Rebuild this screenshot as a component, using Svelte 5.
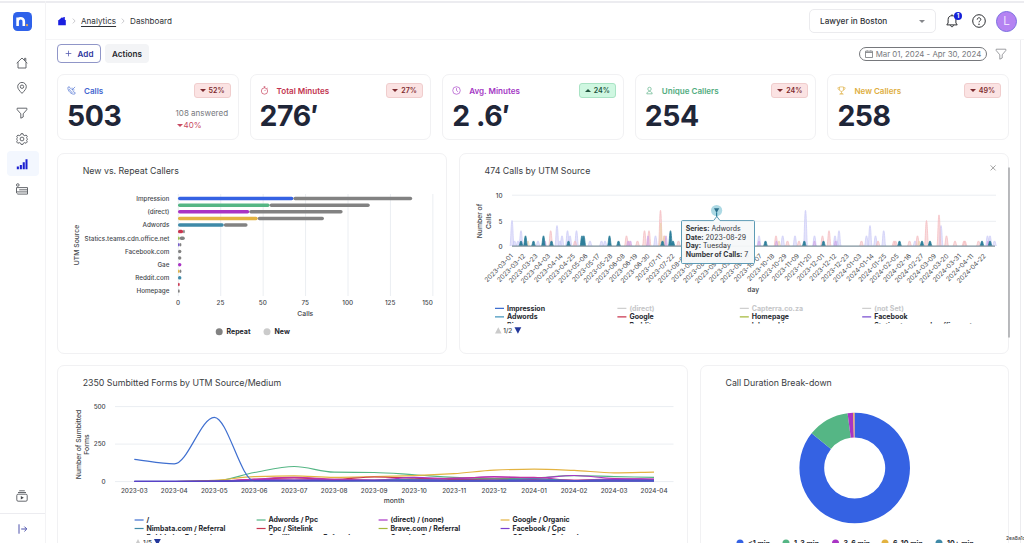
<script>
    const BLUE = '#3562e3';
    const GREEN = '#55b685';
    const PURPLE = '#a934c4';
    const YELLOW = '#e3b341';
    const TEAL = '#3f8aa8';
    const RED = '#c9364f';
    const GRAY = '#828282';

    const kpis = [
        { icon: 'phone', label: 'Calls', value: '503', change: '52%', up: false, color: '#3f66cf' },
        { icon: 'timer', label: 'Total Minutes', value: '276′', change: '27%', up: false, color: '#c2334f' },
        { icon: 'clock', label: 'Avg. Minutes', value: '2 .6′', change: '24%', up: true, color: '#a336c4' },
        { icon: 'user', label: 'Unique Callers', value: '254', change: '24%', up: false, color: '#51ac80' },
        { icon: 'cup', label: 'New Callers', value: '258', change: '49%', up: false, color: '#deae3e' }
    ];

    // new / total callers for every source, only every other one is labelled
    const callers = [
        { name: 'Impression', fresh: 68, total: 138, color: BLUE },
        { name: '', fresh: 54, total: 113, color: GREEN },
        { name: '(direct)', fresh: 42, total: 97, color: PURPLE },
        { name: '', fresh: 47, total: 86, color: YELLOW },
        { name: 'Adwords', fresh: 27, total: 41, color: TEAL },
        { name: '', fresh: 3, total: 4, color: RED },
        { name: 'Statics.teams.cdn.office.net', fresh: 1, total: 4, color: '#9cc24a' },
        { name: '', fresh: 1, total: 2, color: '#6b4fc8' },
        { name: 'Facebook.com', fresh: 0, total: 2, color: GRAY },
        { name: '', fresh: 0, total: 2, color: GRAY },
        { name: 'Gae', fresh: 2, total: 2, color: PURPLE },
        { name: '', fresh: 1, total: 2, color: YELLOW },
        { name: 'Reddit.com', fresh: 2, total: 2, color: TEAL },
        { name: '', fresh: 1, total: 1, color: RED },
        { name: 'Homepage', fresh: 0, total: 1, color: GRAY }
    ];
    const callersX = (v) => 178 + v * 1.697;
    const callersY = (i) => 198.5 + i * 6.61;

    // calls by day: [x, calls]
    const spikes = [
        { color: '#c9c8f6', width: 2.2, points: [[512, 5], [514.5, 1], [518, 1], [521, 3], [538, 1], [557, 4], [560, 1], [562, 2], [567.5, 3], [570, 2], [576.5, 3], [590, 1], [601.5, 1], [605, 1], [655.5, 2], [759, 2], [782.7, 2], [795, 2], [805.5, 7], [814.5, 2], [835, 2], [837, 1], [839, 3], [866.5, 2], [870, 4], [875.5, 2], [883.7, 3], [915, 1], [941, 4], [987.5, 2], [990, 2], [994.5, 1]] },
        { color: '#f3b9bd', width: 2.2, points: [[550.7, 3], [575, 1], [626.5, 2], [629, 1], [637.5, 1], [644.5, 3], [649, 3], [660.5, 7], [664.5, 2], [678.5, 1], [776, 2], [787.5, 1], [799, 1], [822.5, 2], [829, 3], [861.5, 1], [878, 1], [894, 1], [895.5, 1], [909.5, 1], [917.5, 2], [926.5, 5], [939, 6.1], [946.5, 2], [955, 1], [964, 1], [965, 1], [978.5, 1]] },
        { color: '#ecd3ae', width: 1.6, points: [[528, 1], [660.8, 4.5], [664, 2], [779, 1], [919, 1]] },
        { color: '#cfa4e6', width: 1.6, points: [[545, 1], [628, 1], [630.5, 1], [648, 2], [666, 2], [759, 1], [776.5, 1], [814.5, 1], [835.5, 1], [988, 1]] },
    ];
    const adwords = [[521, 1], [525.5, 2], [533.5, 1], [543.5, 2], [551.5, 1], [568.5, 1], [582, 2], [583.8, 2], [609.5, 2], [618.5, 1], [662.5, 1], [670.5, 3], [673, 1], [765.5, 1], [804.3, 1], [823.5, 1], [899.5, 1], [922, 1], [930, 1], [982, 1], [990, 1]];

    function spikePath(points, w) {
        return points.map(([x, v]) => {
            const top = 246 - v * 5.1;
            return `M${x - w} 246C${x - w / 2} 246 ${x - w / 2} ${top} ${x} ${top}S${x + w / 2} 246 ${x + w} 246`;
        }).join('');
    }

    const days = Array.from({ length: 39 }, (_, i) =>
        new Date(Date.UTC(2023, 2, 1 + i * 11)).toISOString().slice(0, 10)
    );

    const sourceLegend = [
        ['Impression', '#3f6fd0', true], ['(direct)', '#cfcfcf', false], ['Capterra.co.za', '#cfcfcf', false], ['(not Set)', '#cfcfcf', false],
        ['Adwords', '#4596bd', true], ['Google', RED, true], ['Homepage', '#a5b93c', true], ['Facebook', '#7a4fd0', true],
        ['Bing', GREEN, true], ['Reddit', PURPLE, true], ['Inbound.io', YELLOW, true], ['Statics.teams.cdn.office.net', TEAL, true]
    ];

    const months = ['2023-03', '2023-04', '2023-05', '2023-06', '2023-07', '2023-08', '2023-09', '2023-10', '2023-11', '2023-12', '2024-01', '2024-02', '2024-03', '2024-04'];
    const formSeries = [
        { color: '#a5b93c', data: [0, 0, 2, 5, 6, 5, 6, 5, 5, 4, 5, 4, 5, 6] },
        { color: GREEN, data: [0, 0, 3, 60, 100, 62, 60, 45, 28, 20, 25, 39, 33, 27] },
        { color: YELLOW, data: [0, 0, 8, 32, 38, 27, 32, 39, 52, 76, 83, 74, 58, 63] },
        { color: RED, data: [0, 0, 2, 14, 24, 14, 30, 22, 14, 15, 12, 8, 10, 9] },
        { color: PURPLE, data: [0, 0, 1, 12, 15, 12, 8, 27, 20, 32, 22, 40, 20, 16] },
        { color: '#c332a4', data: [0, 0, 1, 16, 27, 14, 10, 12, 22, 30, 27, 8, 18, 14] },
        { color: TEAL, data: [0, 0, 2, 6, 8, 6, 8, 14, 8, 10, 18, 6, 12, 8] },
        { color: '#7a3fd0', data: [0, 0, 0, 8, 6, 8, 7, 10, 8, 7, 9, 4, 12, 10] },
        { color: '#3f6fd0', data: [148, 117, 428, 4, 4, 4, 4, 4, 4, 4, 4, 4, 4, 4] },
        { color: '#4d44c4', data: [2, 2, 2, 4, 4, 4, 4, 3, 3, 3, 3, 3, 3, 3] }
    ];
    const formX = (i) => 134.3 + i * 39.98;
    const formY = (v) => 481.5 - v * 0.15;

    // smooth line that never overshoots its own points
    function smooth(data) {
        const step = formX(1) - formX(0);
        const ys = data.map(formY);
        const slope = ys.map((y, i) => {
            if (i === 0) return (ys[1] - y) / step;
            if (i === ys.length - 1) return (y - ys[i - 1]) / step;
            const a = (y - ys[i - 1]) / step;
            const b = (ys[i + 1] - y) / step;
            return a * b <= 0 ? 0 : (2 * a * b) / (a + b);
        });
        let d = `M${formX(0)} ${ys[0]}`;
        for (let i = 1; i < ys.length; i++) {
            d += `C${formX(i - 1) + step / 3} ${ys[i - 1] + (slope[i - 1] * step) / 3} ${formX(i) - step / 3} ${ys[i] - (slope[i] * step) / 3} ${formX(i)} ${ys[i]}`;
        }
        return d;
    }

    const formLegend = [
        ['/', '#3f6fd0'], ['Adwords / Ppc', GREEN], ['(direct) / (none)', PURPLE], ['Google / Organic', YELLOW],
        ['Nimbata.com / Referral', TEAL], ['Ppc / Sitelink', RED], ['Brave.com / Referral', '#a5b93c'], ['Facebook / Cpc', '#7a3fd0'],
        ['Bubble.io / Referral', BLUE], ['Capilliance.co / Referral', GREEN], ['Google / Cpc', PURPLE], ['GSuape.x / Referral', YELLOW]
    ];

    const durations = [
        { name: '<1 min', from: 0, to: 308.8, color: BLUE, x: 740 },
        { name: '1-3 min', from: 308.8, to: 352.6, color: GREEN, x: 786 },
        { name: '3-6 min', from: 352.6, to: 358.4, color: PURPLE, x: 835.5 },
        { name: '6-10 min', from: 358.4, to: 359.3, color: YELLOW, x: 885 },
        { name: '10+ min', from: 359.3, to: 360, color: '#c8788c', x: 939, dot: TEAL }
    ];
    function arc({ from, to }) {
        const pt = (deg, r) => {
            const a = (deg * Math.PI) / 180;
            return `${854.7 + r * Math.sin(a)} ${468 - r * Math.cos(a)}`;
        };
        const big = to - from > 180 ? 1 : 0;
        return `M${pt(from, 55.3)}A55.3 55.3 0 ${big} 1 ${pt(to, 55.3)}L${pt(to, 30.5)}A30.5 30.5 0 ${big} 0 ${pt(from, 30.5)}Z`;
    }
</script>

<div class="app">
    <aside>
        <svg class="logo" viewBox="0 0 19 19">
            <rect width="19" height="19" rx="4.5" fill="#2f62ea" />
            <path d="M4.6 14V5.600M4.6 9.4c0-4 6.2-4.2 6.2 0V14" fill="none" stroke="#fff" stroke-width="2.6" />
            <circle cx="14" cy="13.1" r="1.2" fill="#e0a35a" />
        </svg>
        <nav>
            <a href="#home"><svg viewBox="0 0 12 12"><path d="M.7 6.2 6 1l5.3 5.2M2 5.2V11h8V5.2M8.6 3.2V1.3h1.2v3" /></svg></a>
            <a href="#places"><svg viewBox="0 0 12 12"><path d="M6 11.4C3.4 8.6 1.7 6.8 1.7 4.7a4.3 4.3 0 0 1 8.6 0c0 2.1-1.7 3.9-4.3 6.7z" /><circle cx="6" cy="4.7" r="1.7" /></svg></a>
            <a href="#filter"><svg viewBox="0 0 12 12"><path d="M1.2 1.2h9.6v1.5L7.2 6.8V10L4.8 11.2V6.8L1.2 2.7z" /></svg></a>
            <a href="#settings"><svg viewBox="0 0 12 12"><path d="m5 .7h2l.4 1.4 1.4.6 1.3-.7L11.3 3.3l-.7 1.2.5 1.1.4.4-.4.9-.5.7.7 1.3-1.3 1.4-1.2-.7-1.4.6L7 11.4H5l-.4-1.2-1.4-.6-1.3.7L.6 8.9l.8-1.3-.5-.9V5.3l.5-.8L.7 3.2 2 2l1.2.7 1.4-.6z" /><circle cx="6" cy="6" r="1.9" /></svg></a>
            <a href="#reports" class="active"><svg viewBox="0 0 12 12"><path class="solid" d="M.8 8.4h2.1v2.8H.8zM3.8 7h2.1v4.2H3.8zM6.7 4.3h2.1v6.9H6.7zM9.5 1.2h2v10h-2z" /></svg></a>
            <a href="#forms"><svg viewBox="0 0 12 12"><circle cx="1.800" cy="2" r="1.3" /><path d="M.5 4.600h11v6.500H1.800L.5 9.900zM3.200 6.800h8.300M.8 8.900h10.700" /></svg></a>
        </nav>
        <a class="videos" href="#videos"><svg viewBox="0 0 12 12"><path d="M3.2.8h5.6M2 2.5h8" /><rect x=".8" y="4.2" width="10.4" height="7" rx="1.3" /><path class="solid" d="M4.8 5.9v3.6l3-1.8z" /></svg></a>
        <a class="expand" href="#expand"><svg viewBox="0 0 12 12"><path d="M2 1.3v9.4M4.2 6h5.2M7.4 3.6 9.8 6 7.4 8.4" /></svg></a>
    </aside>

    <div class="page">
        <header>
            <div class="crumbs">
                <svg class="home" viewBox="0 0 10 10"><path d="M.7 5 5 1.2l1.3 1V1h1.5v2.4L9.3 5H8.8v4.3H1.2V5z" /></svg>
                <svg class="chev" viewBox="0 0 4 6"><path d="m.8.6 2.3 2.4L.8 5.4" /></svg>
                <a href="#analytics">Analytics</a>
                <svg class="chev" viewBox="0 0 4 6"><path d="m.8.6 2.3 2.4L.8 5.4" /></svg>
                <span>Dashboard</span>
            </div>
            <div class="tools">
                <button class="select"><span>Lawyer in Boston</span><i></i></button>
                <div class="bell">
                    <svg viewBox="0 0 12 14"><path d="M.8 10.9h10.4L9.9 9V5.600C9.900 3.100 8.300 1.700 6 1.700S2.100 3.100 2.100 5.600V9zM6 1.700V.4M4.500 11.200c0 2 3 2 3 0" /></svg>
                    <b>1</b>
                </div>
                <svg class="help" viewBox="0 0 14 14"><circle cx="7" cy="7" r="6.300" /><path d="M5.200 5.600C5.200 3.200 8.800 3.200 8.800 5.500 8.800 6.800 7 6.900 7 8.300" /><circle cx="7" cy="10.200" r=".35" /></svg>
                <div class="avatar">L</div>
            </div>
        </header>

        <main>
            <div class="toolbar">
                <button class="add"><svg viewBox="0 0 8 8"><path d="M4 .8v6.400M.8 4h6.400" /></svg>Add</button>
                <button class="actions">Actions</button>
                <div class="range">
                    <svg viewBox="0 0 8 8"><path d="M.5 1.200h7v6.300h-7zM.5 2.500h7M2.200.3v.9M5.800.3v.9" /></svg>
                    Mar 01, 2024 - Apr 30, 2024
                </div>
                <svg class="funnel" viewBox="0 0 12 12"><path d="M1.200 1.200h9.600v1.300L7.200 6.800V10L4.800 11.200V6.800L1.200 2.500z" /></svg>
            </div>

            <section class="kpis">
                {#each kpis as kpi}
                    <div class="card kpi">
                        <div class="kpi-head" style="color: {kpi.color}">
                            <svg viewBox="0 0 10 10">
                                {#if kpi.icon === 'phone'}
                                    <path d="M1 1.500 2.500.8l1.300 2.200-1 1c.6 1.400 1.600 2.500 3 3.200l1-1L9.200 7.500 8.500 9C5 9.800.5 5.500 1 1.500zM9 1 5.800 4.200M5.600 1.800v2.600h2.700" />
                                {:else if kpi.icon === 'timer'}
                                    <circle cx="5" cy="5.600" r="3.500" /><path d="M5 5.600 6.400 4.200M4 .8h2M5 .8v1.200M8 2l.7.7" />
                                {:else if kpi.icon === 'clock'}
                                    <circle cx="5" cy="5" r="4.200" /><path d="M5 2.300V5l1.800 1.500" />
                                {:else if kpi.icon === 'user'}
                                    <circle cx="5" cy="3.300" r="1.900" /><path d="M2 8.700c.2-3.500 5.800-3.500 6 0z" />
                                {:else}
                                    <path d="M2.800 1h4.400v2.600c0 3.300-4.400 3.300-4.400 0zM2.800 1.900H1c0 1.800.8 2.500 2.200 2.600M7.200 1.900H9c0 1.800-.8 2.500-2.200 2.600M5 6.100v2.200M3 9c0-.9 4-.9 4 0z" />
                                {/if}
                            </svg>
                            <span>{kpi.label}</span>
                            <em class:up={kpi.up}><i></i>{kpi.change}</em>
                        </div>
                        <div class="kpi-body">
                            <strong>{kpi.value}</strong>
                            {#if kpi.icon === 'phone'}
                                <div class="answered">108 answered<span><i></i>40%</span></div>
                            {/if}
                        </div>
                    </div>
                {/each}
            </section>

            <section class="row first">
                <div class="card">
                    <svg class="chart" width="389" height="199" viewBox="58 154 389 199">
                        <text class="title" x="82.700" y="174">New vs. Repeat Callers</text>
                        {#each [0, 25, 50, 75, 100, 125, 150] as tick}
                            <path class="grid" d="M{callersX(tick) + .3} 194V296" />
                            <text class="axis" x={tick === 150 ? 427.500 : callersX(tick)} y="304.700" text-anchor="middle">{tick}</text>
                        {/each}
                        {#each callers as c, i}
                            <text class="axis" x="169.400" y={callersY(i) + 2.400} text-anchor="end">{c.name}</text>
                            {#if c.fresh}
                                <rect x="178" y={callersY(i) - 1.700} width={c.fresh * 1.697} height="3.500" rx="1.700" fill={c.color} />
                            {/if}
                            {#if c.total > c.fresh}
                                <rect x={callersX(c.fresh)} y={callersY(i) - 1.700} width={(c.total - c.fresh) * 1.697} height="3.500" rx="1.700" fill={GRAY} />
                            {/if}
                        {/each}
                        <text class="name" x="305.300" y="315.800" text-anchor="middle">Calls</text>
                        <text class="name" transform="translate(79 245) rotate(-90)" text-anchor="middle">UTM Source</text>
                        <circle cx="219.200" cy="331.800" r="3.500" fill="#828282" />
                        <text class="legend" x="226.500" y="334.400">Repeat</text>
                        <circle cx="267" cy="331.800" r="3.500" fill="#cbcbcb" />
                        <text class="legend" x="274.500" y="334.400">New</text>
                    </svg>
                </div>

                <div class="card">
                    <svg class="chart" width="549" height="199" viewBox="460 154 549 199">
                        <defs><clipPath id="rows"><rect x="480" y="300" width="520" height="23.500" /></clipPath></defs>
                        <text class="title" x="484.500" y="174">474 Calls by UTM Source</text>
                        <path d="m990.600 165.400 5 5m0-5-5 5" stroke="#8b8b8b" stroke-width=".8" />
                        <path d="M1009 167.500V337.500" stroke="#a3a5a8" stroke-width="1.500" />
                        <path class="grid" d="M512 195.200H996M512 221.300H996" />
                        <text class="axis" x="502.500" y="197.600" text-anchor="end">10</text>
                        <text class="axis" x="502.500" y="223.600" text-anchor="end">5</text>
                        <text class="axis" x="502.500" y="248.600" text-anchor="end">0</text>
                        <text class="name" transform="translate(482.300 221) rotate(-90)" text-anchor="middle">Number of</text>
                        <text class="name" transform="translate(491 221) rotate(-90)" text-anchor="middle">Calls</text>
                        {#each spikes as s}
                            <path d={spikePath(s.points, s.width)} fill={s.color} fill-opacity=".5" stroke={s.color} stroke-width=".7" />
                        {/each}
                        <path d={spikePath(adwords, 2.200)} fill="#2f7f9b" stroke="#2f7f9b" stroke-width=".8" />
                        <path d="M512 246.200H995" stroke="#7f929c" stroke-width="1.300" />
                        {#each days as day, i}
                            <text class="axis day" transform="translate({513.300 + i * 12.450} 256.500) rotate(-45)" text-anchor="end">{day}</text>
                        {/each}
                        <text class="name" x="753.200" y="291.800" text-anchor="middle">day</text>
                        <g clip-path="url(#rows)">
                            {#each sourceLegend as [name, color, on], i}
                                <path d="M{495 + (i % 4) * 122.400} {308.300 + Math.floor(i / 4) * 8.500}h9" stroke={color} stroke-width="1.300" />
                                <text class="legend" class:off={!on} x={507 + (i % 4) * 122.400} y={310.800 + Math.floor(i / 4) * 8.500}>{name}</text>
                            {/each}
                        </g>
                        <path d="m495 333.500 3.300-6.200 3.300 6.200z" fill="#cbcbcb" />
                        <text class="pager" x="503.300" y="333.200">1/2</text>
                        <path d="m514.500 327.200 3.400 6.600 3.400-6.600z" fill="#23379b" />

                        <circle cx="716.600" cy="210.500" r="5.600" fill="#add9e4" />
                        <path d="m714 208.300h5.200l-2.600 4.800z" fill="#2b6f8b" />
                        <path d="M716.600 212.500V218" stroke="#2b7f9b" stroke-width="1.200" />
                        <path d="M682.500 220.600H713.600L716.800 216.400 720 220.600H753.500a1 1 0 0 1 1 1V262.500a1 1 0 0 1-1 1H682.500a1 1 0 0 1-1-1V221.600a1 1 0 0 1 1-1z" fill="#f6f8f9" fill-opacity=".96" stroke="#5d9bb5" />
                        <text class="tip" x="685.700" y="231.300"><tspan>Series:</tspan> Adwords</text>
                        <text class="tip" x="685.700" y="239.900"><tspan>Date:</tspan> 2023-08-29</text>
                        <text class="tip" x="685.700" y="248.400"><tspan>Day:</tspan> Tuesday</text>
                        <text class="tip" x="685.700" y="257"><tspan>Number of Calls:</tspan> 7</text>
                    </svg>
                </div>
            </section>

            <section class="row second">
                <div class="card">
                    <svg class="chart" width="630" height="220" viewBox="58 366 630 220">
                        <defs><clipPath id="form-rows"><rect x="120" y="510" width="560" height="25" /></clipPath></defs>
                        <text class="title" x="82.700" y="386">2350 Sumbitted Forms by UTM Source/Medium</text>
                        {#each [0, 250, 500] as tick}
                            <path class="grid" d="M115 {formY(tick) + .1}H673.500" />
                            <text class="axis" x="105.700" y={formY(tick) + 2.400} text-anchor="end">{tick}</text>
                        {/each}
                        <text class="name" transform="translate(80.600 444.500) rotate(-90)" text-anchor="middle">Number of Sumbitted</text>
                        <text class="name" transform="translate(89.200 444.500) rotate(-90)" text-anchor="middle">Forms</text>
                        {#each formSeries as s}
                            <path d={smooth(s.data)} fill="none" stroke={s.color} stroke-width="1.200" />
                        {/each}
                        {#each months as month, i}
                            <text class="axis" x={formX(i)} y="492.600" text-anchor="middle">{month}</text>
                        {/each}
                        <text class="name" x="394" y="503" text-anchor="middle">month</text>
                        <g clip-path="url(#form-rows)">
                            {#each formLegend as [name, color], i}
                                <path d="M{134.600 + (i % 4) * 122} {520 + Math.floor(i / 4) * 8.500}h9" stroke={color} stroke-width="1.200" />
                                <text class="legend" x={146.400 + (i % 4) * 122} y={522.400 + Math.floor(i / 4) * 8.700}>{name}</text>
                            {/each}
                        </g>
                        <path d="m134.800 545.300 3.200-6.300 3.200 6.300z" fill="#cbcbcb" />
                        <text class="pager" x="143" y="544.800">1/5</text>
                        <path d="m154 539 3.400 6.600 3.400-6.600z" fill="#23379b" />
                    </svg>
                </div>

                <div class="card">
                    <svg class="chart" width="308" height="220" viewBox="701 366 308 220">
                        <text class="title" x="725.500" y="386">Call Duration Break-down</text>
                        {#each durations as d}
                            <path d={arc(d)} fill={d.color} />
                            <circle cx={d.x} cy="543" r="3.500" fill={d.dot ?? d.color} />
                            <text class="legend" x={d.x + 8} y="545.500">{d.name}</text>
                        {/each}
                    </svg>
                </div>
            </section>
        </main>
        <div class="build">2ea8a1d</div>
    </div>
</div>

<style>
    :global(body) {
        overflow: hidden;
    }

    .app {
        box-sizing: border-box;
        height: 543px;
        overflow: hidden;
        display: flex;
        border-top: 1px solid #fff;
        box-shadow: inset 0 2px 0 #ececf0;
        background: #fff;
        color: #2f3237;
        font-family: Inter, "Liberation Sans", sans-serif;
        font-size: 8.1px;
    }

    aside {
        box-sizing: border-box;
        width: 46px;
        flex: none;
        display: flex;
        flex-direction: column;
        align-items: center;
        padding-top: 11px;
        border-right: 1px solid #f3f3f5;
    }

    aside svg {
        display: block;
        width: 12px;
        height: 12px;
        fill: none;
        stroke: #55585d;
        stroke-width: .9;
    }

    aside .logo {
        width: 19px;
        height: 19px;
        stroke: none;
    }

    .solid {
        fill: #44474c;
        stroke: none;
    }

    nav {
        margin-top: 19.5px;
    }

    nav a {
        box-sizing: border-box;
        display: flex;
        align-items: center;
        justify-content: center;
        width: 32px;
        height: 25.2px;
        padding-right: 2px;
    }

    .active {
        background: #f3f7fe;
        border-radius: 4px;
    }

    .active .solid {
        fill: #1b1fd0;
    }

    .videos {
        margin-top: auto;
        padding: 0 2px 11px 0;
    }

    .expand {
        width: 100%;
        height: 29px;
        display: flex;
        align-items: center;
        justify-content: center;
        border-top: 1px solid #ececf0;
    }

    .expand svg {
        stroke: #3a3fa3;
    }

    .page {
        flex: 1;
        min-width: 0;
        display: flex;
        flex-direction: column;
        position: relative;
    }

    header {
        box-sizing: border-box;
        flex: none;
        height: 39px;
        padding: 2px 7px 0 11px;
        display: flex;
        align-items: center;
        justify-content: space-between;
        border-bottom: 1px solid #f5f5f7;
    }

    .crumbs, .tools {
        display: flex;
        align-items: center;
    }

    .crumbs svg {
        flex: none;
    }

    .home {
        width: 10px;
        height: 10px;
        fill: #1a1fe0;
    }

    .chev {
        width: 4px;
        height: 6px;
        margin: 0 5px;
        fill: none;
        stroke: #b5b5b9;
        stroke-width: .7;
    }

    .crumbs a {
        color: inherit;
        text-underline-offset: 1.5px;
    }

    .select {
        box-sizing: border-box;
        width: 127px;
        height: 24px;
        padding: 0 10px;
        display: flex;
        align-items: center;
        justify-content: space-between;
        border: 1px solid #ebebee;
        border-radius: 5px;
        background: #fff;
        color: #2f3237;
        font: 450 8.2px Inter, sans-serif;
    }

    .select i {
        border: 3px solid transparent;
        border-top-color: #85878b;
        border-bottom: 0;
    }

    .bell {
        position: relative;
        margin-left: 10px;
        height: 14px;
    }

    .bell svg {
        width: 12px;
        height: 14px;
        fill: none;
        stroke: #2b2d31;
    }

    .bell b {
        position: absolute;
        left: 8px;
        top: -2px;
        width: 8px;
        height: 8px;
        border-radius: 50%;
        background: #1420d8;
        color: #fff;
        font-size: 6px;
        line-height: 8px;
        text-align: center;
    }

    .help {
        width: 14px;
        height: 14px;
        margin-left: 14px;
        fill: none;
        stroke: #2b2d31;
    }

    .avatar {
        width: 19px;
        height: 19px;
        margin-left: 10px;
        border: 1px solid #7a6fe0;
        border-radius: 50%;
        background: #b583f2;
        color: #efe3ff;
        font-size: 11.5px;
        line-height: 19px;
        text-align: center;
    }

    main {
        box-sizing: border-box;
        flex: 1;
        min-height: 0;
        padding: 4px 11px 0 11px;
        margin-right: 3px;
        border-right: 1px solid #ececef;
    }

    .toolbar {
        display: flex;
        align-items: center;
        height: 19px;
    }

    .toolbar button {
        box-sizing: border-box;
        height: 19px;
        border-radius: 4px;
        font: 600 8.1px Inter, sans-serif;
    }

    .add {
        width: 44px;
        padding: 0;
        display: flex;
        align-items: center;
        justify-content: center;
        gap: 6px;
        border: 1px solid #9096c8;
        background: #fff;
        color: #2d359c;
    }

    .add svg {
        width: 7px;
        height: 7px;
        stroke: #555cb0;
        stroke-width: .9;
    }

    .actions {
        width: 44px;
        margin-left: 4px;
        padding: 0;
        border: 0;
        background: #f3f4f6;
        color: #26282d;
    }

    .range {
        box-sizing: border-box;
        width: 128px;
        height: 14px;
        margin-left: auto;
        display: flex;
        align-items: center;
        justify-content: center;
        gap: 3px;
        border: 1px solid #76787c;
        border-radius: 7px;
        color: #75777b;
        font-size: 7.85px;
        white-space: nowrap;
    }

    .range svg {
        width: 8px;
        height: 8px;
        flex: none;
        fill: none;
        stroke: #75777b;
        stroke-width: .8;
    }

    .funnel {
        width: 12px;
        height: 12px;
        margin: 0 2px 0 8px;
        fill: none;
        stroke: #85878b;
        stroke-width: .8;
    }

    .card {
        box-sizing: border-box;
        border: 1px solid #f1f1f3;
        border-radius: 7px;
        background: #fff;
    }

    .kpis {
        display: grid;
        grid-template-columns: repeat(5, 1fr);
        gap: 11px;
        width: 952px;
        margin-top: 11px;
    }

    .kpi {
        height: 66px;
        padding: 8px 7px 0 9px;
    }

    .kpi-head {
        display: flex;
        align-items: center;
        height: 15px;
        font-size: 8.05px;
        font-weight: 600;
    }

    .kpi-head svg {
        width: 9px;
        height: 9px;
        margin-right: 8px;
        fill: none;
        stroke: currentColor;
        stroke-width: .7;
    }

    em {
        box-sizing: border-box;
        width: 37px;
        height: 15px;
        margin-left: auto;
        display: flex;
        align-items: center;
        justify-content: center;
        gap: 3px;
        border: 1px solid #f0cdcd;
        border-radius: 3px;
        background: #fbe3e3;
        color: #7d2a2e;
        font-size: 7.1px;
        font-style: normal;
    }

    em i, .answered i {
        border: 3px solid transparent;
        border-top: 3.5px solid currentColor;
        border-bottom: 0;
    }

    em.up {
        border-color: #a9e3c4;
        background: #cff7e1;
        color: #22553f;
    }

    em.up i {
        border-top: 0;
        border-bottom: 3.5px solid currentColor;
    }

    .kpi-body {
        display: flex;
        justify-content: space-between;
    }

    strong {
        margin-top: 1px;
        color: #1f2638;
        font-size: 28.4px;
        letter-spacing: -.4px;
        line-height: 34px;
        white-space: nowrap;
    }

    .answered {
        width: 55px;
        margin-top: 10px;
        color: #77797e;
        font-size: 8px;
        line-height: 11.5px;
        white-space: nowrap;
    }

    .answered span {
        display: flex;
        align-items: center;
        gap: 1px;
        margin-left: 1px;
        color: #c84a62;
    }

    .row {
        display: grid;
        gap: 12px;
        width: 952px;
    }

    .first {
        grid-template-columns: 390px 550px;
        margin-top: 13px;
        height: 201px;
    }

    .second {
        grid-template-columns: 631px 309px;
        margin-top: 11px;
        height: 222px;
    }

    .chart {
        display: block;
        fill: #43464b;
        overflow: visible;
    }

    .grid {
        fill: none;
        stroke: #ebeef2;
        stroke-width: 1;
    }

    .title {
        fill: #3a3d42;
        font-size: 8.8px;
    }

    .axis {
        fill: #45484d;
        font-size: 6.3px;
        font-weight: 500;
    }

    .day {
        font-size: 6.5px;
        font-weight: 400;
    }

    .name {
        font-size: 6.8px;
        font-weight: 500;
    }

    .legend {
        fill: #26292f;
        font-size: 7px;
        font-weight: 700;
    }

    .off {
        fill: #c5c6c8;
    }

    .pager {
        font-size: 6.4px;
        font-weight: 500;
    }

    .tip {
        fill: #33363b;
        font-size: 6.95px;
    }

    .tip tspan {
        font-weight: 700;
    }

    .build {
        position: absolute;
        left: 960px;
        top: 534px;
        color: #333;
        font-size: 5px;
        line-height: 6px;
    }
</style>
